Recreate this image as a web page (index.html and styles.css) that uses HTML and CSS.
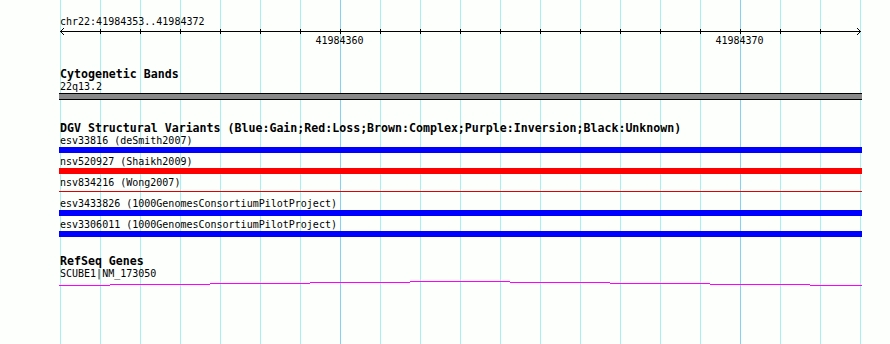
FILE: index.html
```html
<!DOCTYPE html>
<html lang="en">
<head>
    <meta charset="UTF-8">
    <title>chr22:41984353..41984372</title>
    <link rel="stylesheet" href="styles.css">
</head>

<body>
    <div class="browser">
        <div class="locus">chr22:41984353..41984372</div>

        <!-- ruler: one base = 40px, first base starts at x=60 -->
        <svg class="axis" width="890" height="24" viewBox="0 0 890 24">
            <g fill="#000" shape-rendering="crispEdges">
                <rect x="60" y="4" width="801" height="1"></rect>
                <rect x="100" y="2" width="1" height="5"></rect>
                <rect x="140" y="2" width="1" height="5"></rect>
                <rect x="180" y="2" width="1" height="5"></rect>
                <rect x="220" y="2" width="1" height="5"></rect>
                <rect x="260" y="2" width="1" height="5"></rect>
                <rect x="300" y="2" width="1" height="5"></rect>
                <rect x="340" y="2" width="1" height="5"></rect>
                <rect x="380" y="2" width="1" height="5"></rect>
                <rect x="420" y="2" width="1" height="5"></rect>
                <rect x="460" y="2" width="1" height="5"></rect>
                <rect x="500" y="2" width="1" height="5"></rect>
                <rect x="540" y="2" width="1" height="5"></rect>
                <rect x="580" y="2" width="1" height="5"></rect>
                <rect x="620" y="2" width="1" height="5"></rect>
                <rect x="660" y="2" width="1" height="5"></rect>
                <rect x="700" y="2" width="1" height="5"></rect>
                <rect x="740" y="2" width="1" height="5"></rect>
                <rect x="780" y="2" width="1" height="5"></rect>
                <rect x="820" y="2" width="1" height="5"></rect>
            </g>
            <path d="M64 1 L60.5 4.5 L64 8 M857 1 L860.5 4.5 L857 8" fill="none" stroke="#000" stroke-width="1"></path>
            <text class="axis-label" x="339.5" y="17" text-anchor="middle">41984360</text>
            <text class="axis-label" x="739.5" y="17" text-anchor="middle">41984370</text>
        </svg>

        <section class="track cyto">
            <h2 class="track-title">Cytogenetic Bands</h2>
            <div class="feature-label">22q13.2</div>
            <div class="band"></div>
        </section>

        <section class="track dgv">
            <h2 class="track-title">DGV Structural Variants (Blue:Gain;Red:Loss;Brown:Complex;Purple:Inversion;Black:Unknown)</h2>
            <div class="variant">
                <div class="feature-label">esv33816 (deSmith2007)</div>
                <div class="bar gain"></div>
            </div>
            <div class="variant">
                <div class="feature-label">nsv520927 (Shaikh2009)</div>
                <div class="bar loss"></div>
            </div>
            <div class="variant">
                <div class="feature-label">nsv834216 (Wong2007)</div>
                <div class="bar loss-thin"></div>
            </div>
            <div class="variant">
                <div class="feature-label">esv3433826 (1000GenomesConsortiumPilotProject)</div>
                <div class="bar gain"></div>
            </div>
            <div class="variant">
                <div class="feature-label">esv3306011 (1000GenomesConsortiumPilotProject)</div>
                <div class="bar gain"></div>
            </div>
        </section>

        <section class="track refseq">
            <h2 class="track-title">RefSeq Genes</h2>
            <div class="feature-label">SCUBE1|NM_173050</div>
            <!-- transcript line, drawn a few pixels bowed like the original -->
            <svg class="gene" width="890" height="10" viewBox="0 0 890 10">
                <g fill="#ff00ff" shape-rendering="crispEdges">
                    <rect x="59" y="6" width="51" height="1"></rect>
                    <rect x="110" y="5" width="100" height="1"></rect>
                    <rect x="210" y="4" width="100" height="1"></rect>
                    <rect x="310" y="3" width="100" height="1"></rect>
                    <rect x="410" y="2" width="100" height="1"></rect>
                    <rect x="510" y="3" width="100" height="1"></rect>
                    <rect x="610" y="4" width="100" height="1"></rect>
                    <rect x="710" y="5" width="100" height="1"></rect>
                    <rect x="810" y="6" width="52" height="1"></rect>
                </g>
            </svg>
        </section>
    </div>
</body>

</html>
```

FILE: styles.css
```css
body {
    margin: 0;
    background: #fdfffd;
}

.browser {
    width: 890px;
    height: 344px;
    overflow: hidden;
    font-family: "DejaVu Sans Mono", "Liberation Mono", monospace;
    font-size: 10px;
    color: #000;
    background-color: #fdfffd;
    background-image:
        linear-gradient(#86d2ee, #86d2ee),
        linear-gradient(#86d2ee, #86d2ee),
        repeating-linear-gradient(to right, #aaeeee 0 1px, transparent 1px 40px);
    background-position: 340px 0, 740px 0, 60px 0;
    background-size: 1px 100%, 1px 100%, 801px 100%;
    background-repeat: no-repeat;
}

.locus {
    margin-top: 17px;
    padding-left: 60px;
    height: 10px;
    line-height: 10px;
}

.axis {
    display: block;
}

.axis-label {
    font-family: "DejaVu Sans Mono", "Liberation Mono", monospace;
    font-size: 10px;
    fill: #000;
}

.track-title {
    margin: 0 0 2px 0;
    padding-left: 60px;
    height: 10px;
    line-height: 10px;
    font-size: 11.6px;
    font-weight: bold;
}

.feature-label {
    padding-left: 60px;
    height: 11px;
    line-height: 11px;
    white-space: nowrap;
}

.cyto {
    margin-top: 18px;
}

.band {
    margin: 1px 0 0 59px;
    width: 803px;
    height: 5px;
    background: #898989;
    border-top: 1px solid #000;
    border-bottom: 1px solid #000;
}

.dgv {
    margin-top: 23px;
}

.variant {
    margin-bottom: 3px;
}

.bar {
    margin: 1px 0 0 59px;
    width: 803px;
    height: 6px;
}

.gain {
    background: #0000ff;
}

.loss {
    background: #ff0000;
}

.loss-thin {
    background: linear-gradient(#e00000, #e00000) 0 2px / 100% 1px no-repeat;
}

.refseq {
    margin-top: 19px;
}

.gene {
    display: block;
}
```
